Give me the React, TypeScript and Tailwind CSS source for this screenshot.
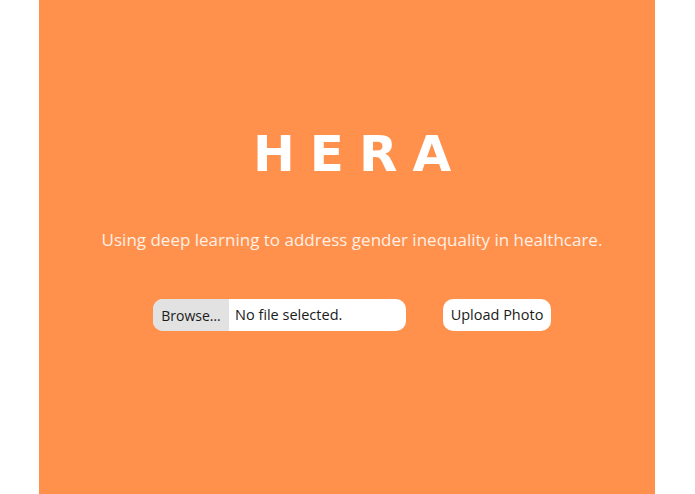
import React from 'react'

const App = () => {
    return (
        <div className="flex w-full h-[494px] pl-[39px] bg-white">
            <main className="flex flex-col items-center w-[616px] h-full bg-[#FF914D] pl-[10px] font-['Open_Sans',sans-serif]">
                {/* TITLE */}
                <h1 className="mt-[121px] text-[50px] leading-[66px] font-black tracking-[15px] pl-[15px] text-white font-['DejaVu_Sans',sans-serif]">HERA</h1>

                {/* TAGLINE */}
                <p className="mt-[41px] text-[17px] leading-[24px] text-[#FFEFE4]">
                    Using deep learning to address gender inequality in healthcare.
                </p>

                {/* UPLOAD */}
                <div className="flex items-center gap-[37px] mt-[47px]">
                    <div className="flex w-[253px] h-[32px] rounded-[10px] bg-white overflow-hidden text-[14.5px] text-[#1a1a1a]">
                        <span className="flex items-center justify-center w-[76px] bg-[#E2E2E2] text-[14px]">Browse…</span>
                        <span className="flex items-center px-[6px]">No file selected.</span>
                    </div>
                    <button type="button" className="w-[108px] h-[32px] rounded-[10px] bg-white text-[14.5px] text-[#1a1a1a]">
                        Upload Photo
                    </button>
                </div>
            </main>
        </div>
    )
}

export default App
